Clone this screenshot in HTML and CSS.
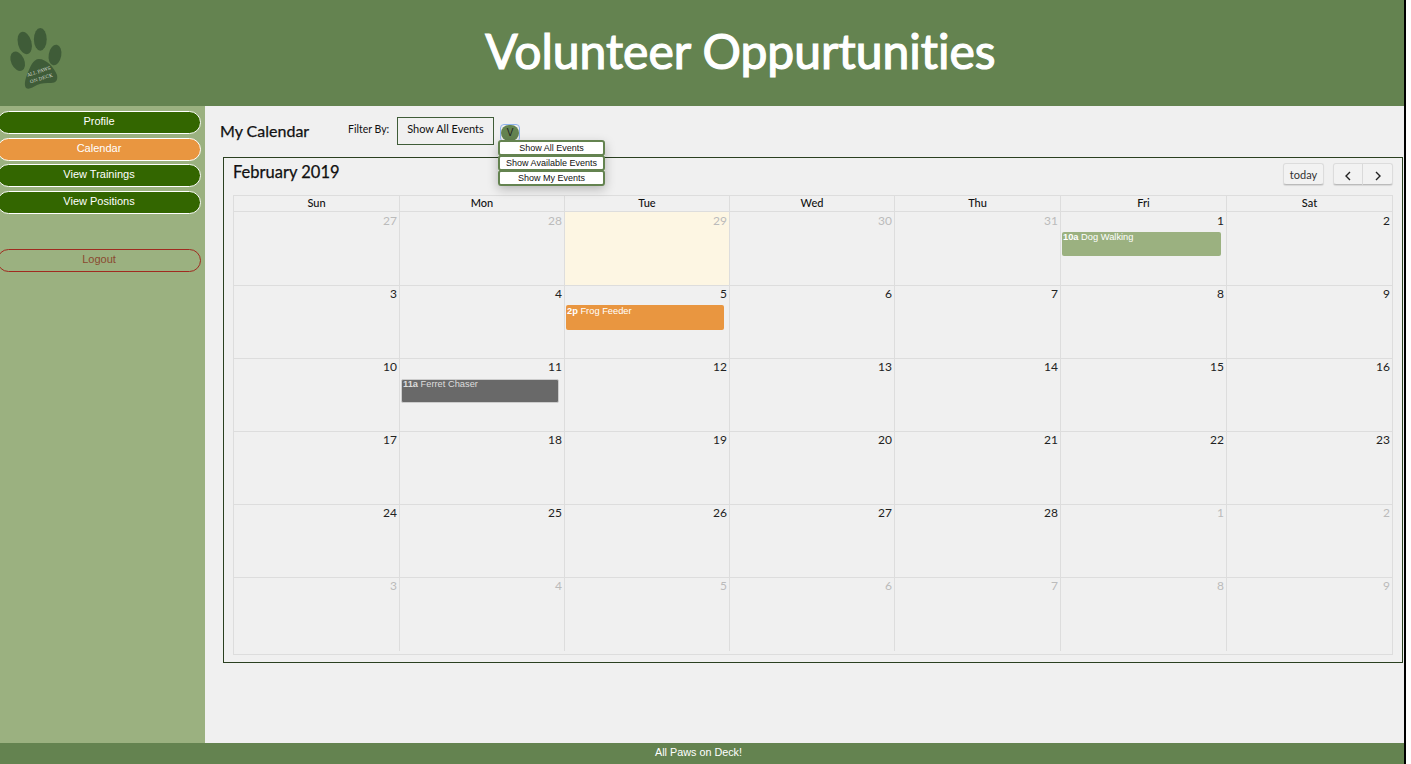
FILE: index.html
```html
<!DOCTYPE html>
<html lang="en">

<head>
  <meta charset="UTF-8">
  <meta name="viewport" content="width=device-width, initial-scale=1.0">
  <title>Volunteer Oppurtunities</title>
  <link rel="stylesheet" href="styles.css">
</head>

<body>
  <div class="page">
    <!-- Header -->
    <div class="header">
      <svg class="logo" viewBox="0 20 70 75" aria-hidden="true">
        <ellipse cx="24.7" cy="43" rx="6.8" ry="11.4" transform="rotate(-15 24.7 43)" />
        <ellipse cx="40.3" cy="39.3" rx="6.4" ry="11.4" />
        <ellipse cx="55" cy="55" rx="6.3" ry="10.4" transform="rotate(10 55 55)" />
        <ellipse cx="17.7" cy="61.3" rx="6.6" ry="10.2" transform="rotate(-25 17.7 61.3)" />
        <path d="M26 88 C24 85 25 80 27 75 C30 67 33 59 39 59 C46 59 54 67 57 75 C58 80 56 83 51 83 C46 83 42 83 37 85 C33 87 29 90 26 88 Z" />
        <text class="logo-text" transform="rotate(-18 39 72)" x="39" y="73">ALL PAWS</text>
        <text class="logo-text" transform="rotate(-18 41 78)" x="41" y="80">ON DECK</text>
      </svg>
      <h1>Volunteer Oppurtunities</h1>
    </div>

    <div class="main">
      <!-- Sidebar -->
      <div class="sidebar">
        <a class="nav-btn" href="#">Profile</a>
        <a class="nav-btn active" href="#">Calendar</a>
        <a class="nav-btn" href="#">View Trainings</a>
        <a class="nav-btn" href="#">View Positions</a>
        <a class="nav-btn logout" href="#">Logout</a>
      </div>

      <div class="content">
        <div class="toolbar">
          <h2>My Calendar</h2>
          <span class="filter-label">Filter By:</span>
          <div class="filter-current">Show All Events</div>
          <div class="dropdown">
            <button class="toggle" type="button"><span>V</span></button>
            <div class="menu">
              <a href="#">Show All Events</a>
              <a href="#">Show Available Events</a>
              <a href="#">Show My Events</a>
            </div>
          </div>
        </div>

        <div class="calendar">
          <div class="cal-top">
            <h3>February 2019</h3>
            <div class="cal-buttons">
              <button class="cal-btn" type="button">today</button>
              <div class="btn-group">
                <button class="cal-btn" type="button">
                  <svg viewBox="0 0 10 10"><path d="M7 1 L3 5 L7 9" /></svg>
                </button>
                <button class="cal-btn" type="button">
                  <svg viewBox="0 0 10 10"><path d="M3 1 L7 5 L3 9" /></svg>
                </button>
              </div>
            </div>
          </div>

          <div class="grid">
            <div class="day-names">
              <div>Sun</div><div>Mon</div><div>Tue</div><div>Wed</div><div>Thu</div><div>Fri</div><div>Sat</div>
            </div>

            <div class="week first">
              <div class="day other">27</div>
              <div class="day other">28</div>
              <div class="day other today">29</div>
              <div class="day other">30</div>
              <div class="day other">31</div>
              <div class="day">1<div class="event green"><b>10a</b> Dog Walking</div></div>
              <div class="day">2</div>
            </div>
            <div class="week">
              <div class="day">3</div>
              <div class="day">4</div>
              <div class="day">5<div class="event orange"><b>2p</b> Frog Feeder</div></div>
              <div class="day">6</div>
              <div class="day">7</div>
              <div class="day">8</div>
              <div class="day">9</div>
            </div>
            <div class="week">
              <div class="day">10</div>
              <div class="day">11<div class="event gray"><b>11a</b> Ferret Chaser</div></div>
              <div class="day">12</div>
              <div class="day">13</div>
              <div class="day">14</div>
              <div class="day">15</div>
              <div class="day">16</div>
            </div>
            <div class="week">
              <div class="day">17</div>
              <div class="day">18</div>
              <div class="day">19</div>
              <div class="day">20</div>
              <div class="day">21</div>
              <div class="day">22</div>
              <div class="day">23</div>
            </div>
            <div class="week">
              <div class="day">24</div>
              <div class="day">25</div>
              <div class="day">26</div>
              <div class="day">27</div>
              <div class="day">28</div>
              <div class="day other">1</div>
              <div class="day other">2</div>
            </div>
            <div class="week last">
              <div class="day other">3</div>
              <div class="day other">4</div>
              <div class="day other">5</div>
              <div class="day other">6</div>
              <div class="day other">7</div>
              <div class="day other">8</div>
              <div class="day other">9</div>
            </div>
          </div>
        </div>
      </div>
    </div>

    <div class="footer">All Paws on Deck!</div>
  </div>
</body>
</html>
```

FILE: styles.css
```css
* {
  box-sizing: border-box;
}

html,
body {
  margin: 0;
  padding: 0;
  height: 100%;
  background-color: #fff;
  overflow: hidden;
}

body {
  font-family: Lato, "Liberation Sans", sans-serif;
  font-variant-ligatures: none;
  color: #111;
}

.page {
  width: 1406px;
  height: 764px;
  display: flex;
  flex-direction: column;
  background-color: #f0f0f0;
  border-right: 2px solid #000;
}

/* Header */
.header {
  height: 106px;
  background-color: #648350;
  display: flex;
  flex-shrink: 0;
}

.logo {
  width: 70px;
  height: 75px;
  margin-top: 20px;
  fill: #3f5c38;
  flex-shrink: 0;
}

.logo-text {
  fill: #d8dcd0;
  font-family: "DejaVu Serif", serif;
  font-size: 4.6px;
  text-anchor: middle;
}

h1 {
  margin: 0;
  flex: 1;
  padding: 19px 0 0 7px;
  text-align: center;
  color: #fff;
  font-weight: 400;
  font-size: 48px;
  line-height: 64px;
  -webkit-text-stroke: 1.2px #fff; /* Lato has no medium weight here */
}

.main {
  flex: 1;
  display: flex;
  min-height: 0;
}

/* Sidebar */
.sidebar {
  width: 205px;
  background-color: #9bb180;
  padding-top: 5px;
  flex-shrink: 0;
  display: flex;
  flex-direction: column;
  gap: 3.6px;
}

.nav-btn {
  display: block;
  width: 204px;
  height: 23px;
  margin-left: -3px;
  text-align: center;
  text-decoration: none;
  font-family: "Liberation Sans", sans-serif;
  font-size: 11px;
  line-height: 18px;
  color: #fff;
  background-color: #336600;
  border: 1px solid #fff;
  border-radius: 12px;
}

.nav-btn.active {
  background-color: #e99640;
}

.nav-btn.logout {
  margin-top: 31.6px;
  background: none;
  border-color: #a02b20;
  color: #8a4a30;
}

/* Content */
.content {
  flex: 1;
  min-width: 0;
}

.toolbar {
  height: 51px;
  display: flex;
  align-items: flex-start;
  padding: 11px 0 0 15px;
}

h2 {
  margin: 3px 0 0;
  font-size: 16px;
  font-weight: 400;
  line-height: 21px;
  width: 128px;
  -webkit-text-stroke: 0.25px #111;
}

.filter-label {
  font-size: 10.5px;
  margin-top: 6px;
  width: 49px;
}

.filter-current {
  width: 97px;
  height: 28px;
  border: 1px solid #3f5c38;
  font-size: 11px;
  text-align: center;
  padding-top: 4px;
}

.dropdown {
  position: relative;
  margin-left: 6px;
  margin-top: 7px;
}

.toggle {
  display: block;
  width: 20px;
  height: 18px;
  padding: 0;
  background: none;
  border: 1px solid #8fb4ee;
  border-radius: 4px;
}

.toggle span {
  display: block;
  height: 16px;
  font-family: "Liberation Sans", sans-serif;
  font-size: 10px;
  line-height: 15px;
  color: #222;
  background-color: #648350;
  border-radius: 8px;
}

.menu {
  position: absolute;
  top: 16px;
  left: -2px;
  width: 107px;
  box-shadow: 0 4px 10px rgba(0, 0, 0, 0.25);
  z-index: 10;
}

.menu a {
  display: block;
  height: 16px;
  margin-bottom: -1px;
  text-align: center;
  font-family: "Liberation Sans", sans-serif;
  font-size: 9px;
  line-height: 12px;
  color: #111;
  text-decoration: none;
  background-color: #fff;
  border: 2px solid #648350;
  border-radius: 3px;
}

/* Calendar */
.calendar {
  width: 1180px;
  height: 506px;
  margin-left: 18px;
  border: 1px solid #2a4020;
  padding: 5px 9px 0 9px;
}

.cal-top {
  height: 32px;
  display: flex;
  justify-content: space-between;
  align-items: flex-start;
}

h3 {
  margin: 0;
  font-size: 16.5px;
  font-weight: 400;
  line-height: 19px;
  -webkit-text-stroke: 0.25px #111;
}

.cal-buttons {
  display: flex;
  gap: 9px;
}

.btn-group {
  display: flex;
}

.cal-btn {
  height: 22px;
  width: 41px;
  padding: 0;
  font-family: Lato, sans-serif;
  font-size: 11px;
  color: #333;
  background-color: #f2f2f2;
  border: 1px solid #dcdcdc;
  border-bottom-color: #bbb;
  border-radius: 3px;
  box-shadow: 0 1px 1px rgba(0, 0, 0, 0.1);
}

.btn-group .cal-btn {
  width: 30px;
}

.btn-group .cal-btn:first-child {
  border-radius: 3px 0 0 3px;
}

.btn-group .cal-btn:last-child {
  border-left: 0;
  border-radius: 0 3px 3px 0;
}

.cal-btn svg {
  width: 10px;
  height: 10px;
  fill: none;
  stroke: #222;
  stroke-width: 1.4;
  vertical-align: middle;
}

.grid {
  border: 1px solid #ddd;
  height: 460px;
}

.day-names,
.week {
  display: grid;
  grid-template-columns: 165px 165px 165px 165px 166px 166px 166px;
}

.day-names {
  height: 16px;
  border-bottom: 1px solid #ddd;
  text-align: center;
  font-size: 11px;
  font-weight: 500;
  line-height: 14px;
}

.day-names div + div,
.day + .day {
  border-left: 1px solid #ddd;
}

.week {
  height: 73px;
  border-bottom: 1px solid #ddd;
  font-size: 12px;
}

.week.first {
  height: 74px;
}

.week.last {
  height: 73px;
  border-bottom: 0;
}

.day {
  padding: 0 2px 0 1px;
  text-align: right;
  line-height: 16px;
  color: #222;
}

.week.first .day {
  padding-top: 1px;
}

.day.other {
  color: #bbb;
}

.day.today {
  background-color: #fdf6e3;
}

.event {
  height: 24px;
  margin: 4px 3px 0 0;
  padding-left: 1px;
  text-align: left;
  font-family: "Liberation Sans", sans-serif;
  font-size: 9.3px;
  line-height: 10px;
  color: #fff;
  border-radius: 2px;
}

.event.green {
  margin-top: 3px;
  background-color: #9bb180;
}

.event.orange {
  height: 25px;
  margin-top: 3px;
  padding-top: 1px;
  background-color: #e99640;
}

.event.gray {
  background-color: #696969;
  border: 1px solid #ccc;
  line-height: 8px;
  color: #ddd;
}

/* Footer */
.footer {
  height: 21px;
  flex-shrink: 0;
  background-color: #648350;
  color: #fff;
  text-align: center;
  font-family: "Liberation Sans", sans-serif;
  font-size: 10.8px;
  line-height: 19px;
  padding-right: 7px;
}
```
